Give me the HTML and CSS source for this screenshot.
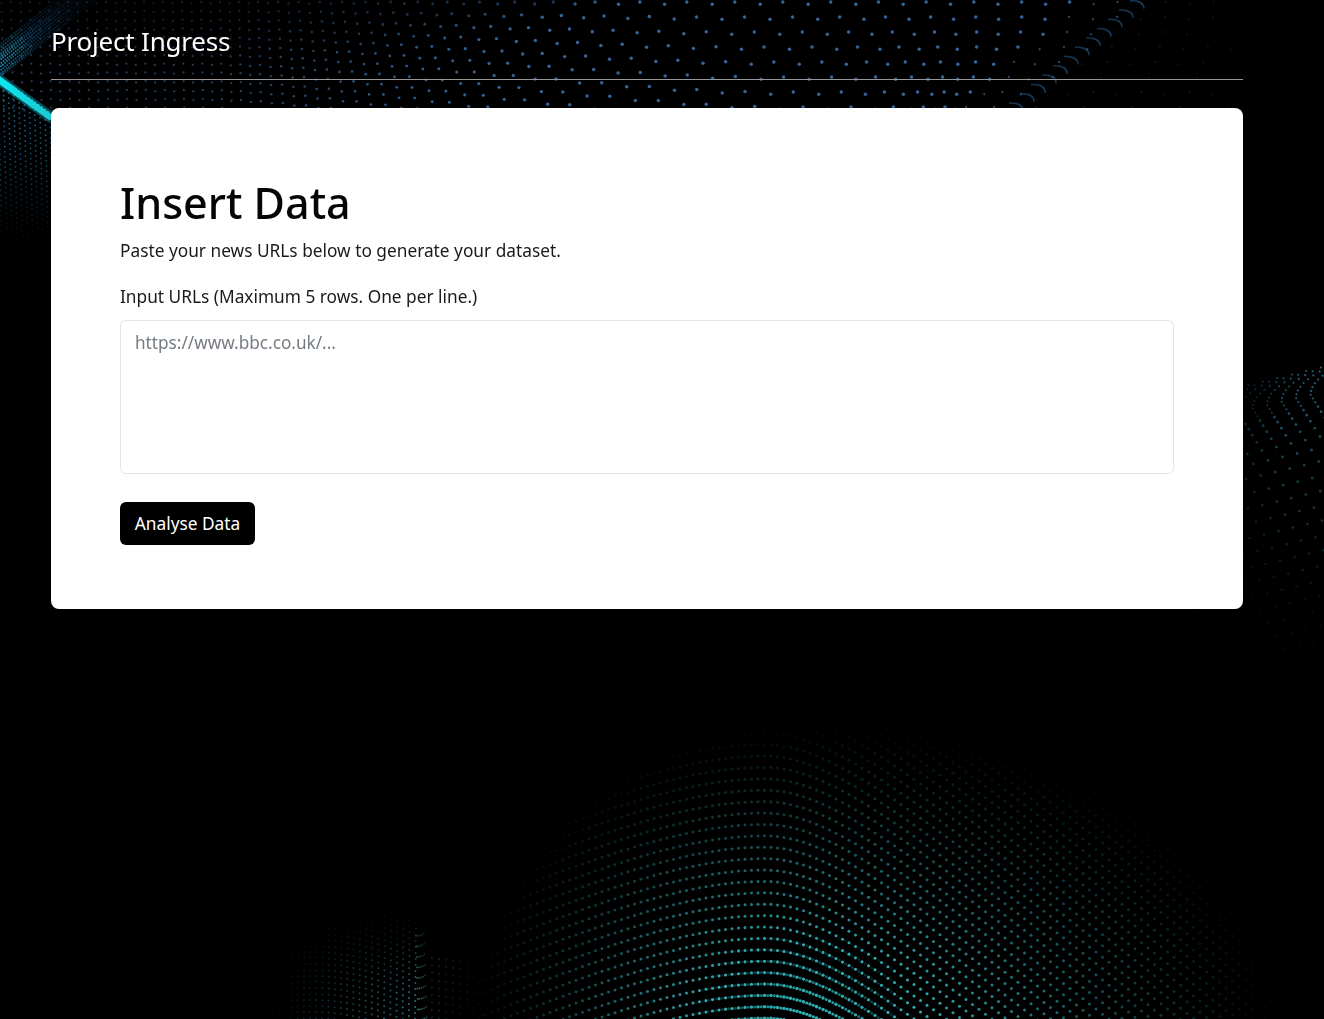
FILE: index.html
```html
<!DOCTYPE html>
<html lang="en">
<head>
<meta charset="utf-8">
<title>Project Ingress</title>
<link rel="stylesheet" href="styles.css">
</head>
<body>
<canvas id="backdrop" class="backdrop" width="1324" height="1019"></canvas>
<div class="page">
  <header class="site-header">
    <span class="brand">Project Ingress</span>
  </header>
  <main class="card">
    <h1 class="title">Insert Data</h1>
    <p class="lead">Paste your news URLs below to generate your dataset.</p>
    <label class="field-label" for="urls">Input URLs (Maximum 5 rows. One per line.)</label>
    <textarea id="urls" class="url-input" placeholder="https://www.bbc.co.uk/..."></textarea>
    <button class="submit" type="button">Analyse Data</button>
  </main>
</div>
<script src="script.js"></script>
</body>
</html>
```
FILE: styles.css
```css
* { box-sizing: border-box; }
html, body { height: 100%; }
body {
  margin: 0;
  background: #000;
  overflow: hidden;
  font-family: "Noto Sans", "Open Sans", "Liberation Sans", sans-serif;
  color: #111;
}
.backdrop {
  position: fixed;
  left: 0;
  top: 0;
  z-index: -1;
  filter: blur(0.6px);
}
.page {
  width: 1192px;
  margin-left: 51px;
  display: flex;
  flex-direction: column;
}
.site-header {
  height: 80px;
  border-bottom: 1px solid #979797;
  padding-top: 21px;
}
.brand {
  display: block;
  color: #fff;
  font-size: 26px;
  line-height: 40px;
  letter-spacing: -0.2px;
}
.card {
  margin-top: 28px;
  height: 501px;
  background: #fff;
  border-radius: 8px;
  padding: 69px 69px 0;
  display: flex;
  flex-direction: column;
  align-items: flex-start;
}
.title {
  margin: 0;
  color: #050505;
  font-size: 43px;
  font-weight: 550;
  line-height: 52px;
}
.lead {
  margin: 9px 0 0;
  font-size: 17.3px;
  line-height: 26px;
  color: #1a1a1a;
}
.field-label {
  margin-top: 20px;
  font-size: 17.3px;
  line-height: 26px;
  color: #1a1a1a;
}
.url-input {
  display: block;
  margin-top: 10px;
  width: 1054px;
  height: 154px;
  padding: 8px 14px;
  border: 1px solid #e3e5e8;
  border-radius: 6px;
  background: #fff;
  font: inherit;
  font-size: 17.2px;
  line-height: 27px;
  resize: none;
  outline: none;
}
.url-input::placeholder { color: #757b82; opacity: 1; }
.submit {
  margin-top: 28px;
  width: 135px;
  height: 43px;
  border: 0;
  border-radius: 6px;
  background: #000;
  color: #fff;
  font: inherit;
  font-size: 17.3px;
  padding: 0;
}
```
FILE: script.js
```js
var ctx = document.getElementById('backdrop').getContext('2d');

function dot(x, y, r, rgb, a) {
  if (a < 0.015) return;
  ctx.fillStyle = 'rgba(' + rgb + ',' + Math.min(a, 1) + ')';
  ctx.beginPath();
  ctx.arc(x, y, r, 0, Math.PI * 2);
  ctx.fill();
}
function smooth(a, b, v) {
  var t = Math.max(0, Math.min(1, (v - a) / (b - a)));
  return t * t * (3 - 2 * t);
}
function mix(a, b, t) { return a + (b - a) * t; }

/* top fan of blue dots */
(function () {
  var x0 = -160;
  var u = 0;
  while (x0 < 1320) {
    var step = x0 < 250 ? 9.5 : mix(10, 24, smooth(250, 700, x0));
    var lean = mix(0.02, 0.65, smooth(230, 620, x0)) * (1 - 0.95 * smooth(780, 1060, x0));
    var bend = -0.0032 * smooth(820, 1060, x0);
    var ds = mix(8.8, 15, smooth(200, 720, x0));
    for (var v = 0; v < 16; v++) {
      var y = 2 + v * ds + (u % 2) * ds * 0.15;
      if (y > 110) break;
      var x = x0 + lean * y + bend * y * y;
      var crest = 1145 - 1.15 * y;
      var a = mix(0.5, 0.85, smooth(150, 560, x));
      a *= 0.5 + 0.5 * smooth(0, 70 * (1 - smooth(350, 620, x)) + 1, y);
      var r = mix(1.15, 1.75, smooth(200, 620, x));
      if (x > crest - 60) { r = 1.15; a *= 0.72; }
      if (x > crest) { a = 0.22 * (1 - smooth(1170, 1315, x)); r = 0.95; }
      dot(x, y, r, '62,118,180', a);
    }
    x0 += step;
    u++;
  }
  /* hooked crest running up to the right */
  for (var k = -1; k < 11; k++) {
    var cx = 1133 - k * 11;
    var cy = 13 + k * 9.3;
    for (var t = 0; t <= 1.001; t += 0.08) {
      var px = cx - 13 * (1 - t) * (1 - t);
      var py = cy - 3 + 8 * t * t;
      dot(px, py, 0.95, '40,96,145', 0.6 * (1 - t * 0.25));
    }
  }
})();

/* upper-left bands */
(function () {
  /* blue band rising to the top edge */
  var ax = -6, ay = 66, bx = 88, by = -8;
  for (var p = 0; p <= 1; p += 0.022) {
    for (var q = -13; q <= 13; q += 2.5) {
      var x = mix(ax, bx, p) + q * 0.6 + (Math.floor(q) % 2) * 0.8;
      var y = mix(ay, by, p) + q * 0.78;
      var a = 0.95 * Math.pow(1 - p, 1.4) + 0.1;
      a *= 1 - Math.abs(q) / 24;
      dot(x, y, 1, p < 0.35 ? '26,155,210' : '40,110,175', a);
    }
  }
  /* lattice below the cyan stripe */
  for (var i = 0; i < 11; i++) {
    for (var j = 0; j < 36; j++) {
      var px = -2 + i * 5.2 + j * 0.12;
      var py = 82 + j * 5.1 + i * 2.4 - 4;
      if (py < 78 + px * 0.75 + 6) continue;
      var al = 0.68 * (1 - smooth(105, 268, py));
      dot(px, py, 0.95, '34,135,190', al);
    }
  }
  /* cyan stripe */
  ctx.lineCap = 'butt';
  ctx.strokeStyle = 'rgba(10,190,215,0.4)';
  ctx.lineWidth = 11;
  ctx.beginPath();
  ctx.moveTo(-2, 79);
  ctx.lineTo(52, 118);
  ctx.stroke();
  var g = ctx.createLinearGradient(0, 79, 52, 118);
  g.addColorStop(0, '#0ce6ee');
  g.addColorStop(0.45, '#12d8e0');
  g.addColorStop(1, '#1fc9d2');
  ctx.strokeStyle = g;
  ctx.lineWidth = 7;
  ctx.beginPath();
  ctx.moveTo(-2, 79);
  ctx.lineTo(52, 118);
  ctx.stroke();
  /* dark hatching on the far end of the stripe */
  for (var h = 0; h < 11; h++) {
    var hx = 17 + h * 3.2;
    var hy = 91 + h * 2.37;
    dot(hx + 1.2, hy - 2, 0.9, '0,55,70', 0.75);
  }
})();

/* right-hand arcs */
(function () {
  for (var j = -10; j < 7; j++) {
    var mx = 1238 + j * 14.5;
    var my = 412 - j * 3.5;
    var y = my - 34;
    while (y < 650) {
      var dy = y - my;
      var x = dy < 0 ? mx + dy * dy * 0.034 : mx + 0.62 * dy;
      var a;
      if (dy < 10) a = mix(0.45, 0.9, smooth(1243, 1320, x));
      else a = 0.62 * (1 - smooth(400, 645, y)) + 0.1;
      a *= 1 - 0.45 * (1 - smooth(1243, 1285, x));
      dot(x, y, dy < 8 ? 1.05 : 1.35, '42,112,145', a);
      y += dy < 5 ? 3.8 : 3.8 + Math.min(9.2, (dy - 5) * 0.18);
    }
  }
})();

/* wave along the bottom edge */
(function () {
  var cx = 765;
  function rowY(y0, x) {
    var dx = x - cx;
    return dx < 0
      ? y0 + 0.44 * (Math.sqrt(dx * dx + 19600) - 140)
      : y0 + 0.82 * (Math.sqrt(dx * dx + 8100) - 90);
  }
  for (var y0 = 300; y0 < 1060; y0 += 11.4) {
    for (var n = 0; n < 140; n++) {
      var x = 420 + n * 6.5;
      var yy = rowY(y0, x);
      if (yy > 1026 || yy < 715) continue;
      var ex = (x - 800) / (x < 800 ? 340 : 490);
      var ey = (yy - 1045) / 330;
      var d = Math.sqrt(ex * ex + ey * ey);
      var alpha = Math.pow(Math.max(0, 1 - d), 1.15) * 1.4;
      var crest = Math.exp(-Math.pow((yy - 1025) / 60, 2)) * Math.exp(-Math.pow((x - 800) / 70, 2));
      dot(x, yy, 1.5 + crest * 0.3, '48,172,178', alpha + crest * 0.5);
      if (crest > 0.08) {
        var nx = x + 3.25;
        dot(nx, rowY(y0, nx), 1.5, '40,190,190', crest * 1.1);
      }
    }
  }
})();

/* lower-left ridge */
(function () {
  for (var r = 0; r < 30; r++) {
    for (var c = 0; c < 24; c++) {
      var x = 416 - c * 6.2 - r * 0.05;
      var y = 905 + r * 6 + c * c * 0.09 - (c % 2) * 3;
      var a = 0.75 * smooth(895, 1015, y) * Math.pow(1 - c / 24, 1.1);
      dot(x, y, 1.05, '52,150,158', a);
    }
  }
  for (var k = 0; k < 9; k++) {
    var ry = 936 + k * 10.5;
    for (var t = 0; t < 1; t += 0.2) {
      dot(416 + t * 10 + k * 0.3, ry - 4 * t * t, 0.9, '90,175,170', (0.32 + k * 0.05) * (1 - t * 0.5));
    }
  }
  for (var i = 0; i < 9; i++) {
    for (var j = 0; j < 9; j++) {
      var qx = 432 + i * 7;
      var qy = 958 + j * 7.4 + i * 0.9;
      dot(qx, qy, 1, '50,130,140', 0.3 * (1 - i / 9));
    }
  }
})();
```
